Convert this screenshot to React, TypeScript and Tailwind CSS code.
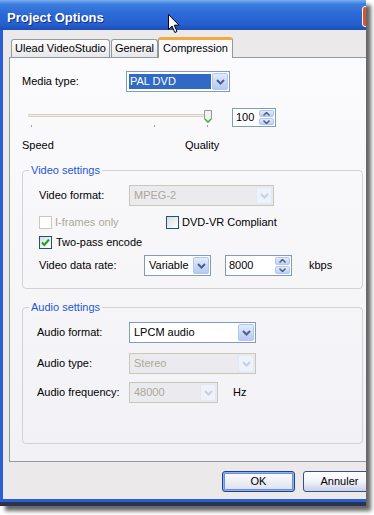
import React from "react";

function Chevron({ disabled }: { disabled?: boolean }) {
  return (
    <svg width="9" height="6" viewBox="0 0 9 6">
      <path d="M1 1 L4.5 4.5 L8 1" stroke={disabled ? "#c6d0e6" : "#4d6185"} strokeWidth="2" fill="none" />
    </svg>
  );
}

function DropBtn({ disabled }: { disabled?: boolean }) {
  return (
    <div
      className={
        disabled
          ? "w-[16px] h-full rounded-[2px] border border-[#e1e8f6] bg-[#eef2fb] flex items-center justify-center"
          : "w-[16px] h-full rounded-[2px] border border-[#b4c6ee] bg-gradient-to-b from-[#e3ebfd] to-[#b4c9f4] flex items-center justify-center"
      }
    >
      <Chevron disabled={disabled} />
    </div>
  );
}

function Select({
  className,
  text,
  disabled,
  highlight,
}: {
  className: string;
  text: string;
  disabled?: boolean;
  highlight?: boolean;
}) {
  return (
    <div
      className={`${className} h-[21px] border flex items-stretch p-[1px] ${
        disabled ? "border-[#c9c7ba] bg-[#ebeaee]" : "border-[#7f9db9] bg-white"
      }`}
    >
      <div className="flex-1 flex items-center p-[1px]">
        {highlight ? (
          <div className="h-full flex-1 bg-[#316ac5] text-white flex items-center px-[1px]">{text}</div>
        ) : (
          <div className={disabled ? "pl-[2px] text-[#aca899]" : "pl-[2px]"}>{text}</div>
        )}
      </div>
      <DropBtn disabled={disabled} />
    </div>
  );
}

function SpinBtns() {
  return (
    <div className="w-[15px] flex flex-col gap-[1px] py-[1px]">
      <div className="flex-1 rounded-[2px] border border-[#b4c6ee] bg-gradient-to-b from-[#e3ebfd] to-[#bccff5] flex items-center justify-center">
        <svg width="7" height="4" viewBox="0 0 7 4">
          <path d="M0.5 3.5 L3.5 0.5 L6.5 3.5" stroke="#4d6185" strokeWidth="1.5" fill="none" />
        </svg>
      </div>
      <div className="flex-1 rounded-[2px] border border-[#b4c6ee] bg-gradient-to-b from-[#e3ebfd] to-[#bccff5] flex items-center justify-center">
        <svg width="7" height="4" viewBox="0 0 7 4">
          <path d="M0.5 0.5 L3.5 3.5 L6.5 0.5" stroke="#4d6185" strokeWidth="1.5" fill="none" />
        </svg>
      </div>
    </div>
  );
}

function SpinBox({ className, value }: { className: string; value: string }) {
  return (
    <div className={`${className} border border-[#7f9db9] bg-white flex items-stretch pr-[1px]`}>
      <div className="flex-1 flex items-center pl-[3px]">{value}</div>
      <SpinBtns />
    </div>
  );
}

function Check({ checked, disabled }: { checked?: boolean; disabled?: boolean }) {
  return (
    <div
      className={
        disabled
          ? "w-[13px] h-[13px] border border-[#cac8bb] bg-white"
          : "w-[13px] h-[13px] border border-[#1c5180] bg-gradient-to-br from-[#dcdcd7] to-white flex items-center justify-center"
      }
    >
      {checked && (
        <svg width="11" height="11" viewBox="0 0 11 11">
          <path d="M2 5.5 L4.3 8 L9 2.5" stroke="#21a121" strokeWidth="2" fill="none" />
        </svg>
      )}
    </div>
  );
}

export default function App() {
  return (
    <div className="w-[374px] h-[515px] bg-white font-['Liberation_Sans',Arial,sans-serif] text-[11px] leading-[13px] text-black">
      <div className="relative w-[366px] h-[506px] overflow-hidden shadow-[5px_5px_4px_rgba(0,0,0,0.6)]">
        <div className="w-[385px] h-full flex flex-col">
          {/* Title bar */}
          <div className="h-[30px] shrink-0 flex items-center pl-[7px] bg-[linear-gradient(to_bottom,#7cadee_0%,#3c7ee0_14%,#2c69d6_45%,#2660cf_80%,#1d4db8_100%)]">
            <span className="pt-[4px] text-white font-bold text-[13px] [text-shadow:1px_1px_0_#10318c]">Project Options</span>
            <div className="ml-auto mr-[2px] mt-[2px] w-[21px] h-[21px] rounded-[3px] border border-white bg-[#d9552f]" />
          </div>
          {/* Body */}
          <div className="flex-1 flex flex-col border-l-[3px] border-b-[3px] border-[#2d5fd4] bg-[#ebe9ea]">
            {/* Tabs */}
            <div className="h-[27px] shrink-0 flex items-end pl-[8px]">
              <div className="w-[99px] h-[18px] border border-b-0 border-[#919b9c] rounded-t-[3px] bg-gradient-to-b from-white to-[#e6e6ec] flex items-center justify-center">
                Ulead VideoStudio
              </div>
              <div className="ml-[1px] w-[47px] h-[18px] border border-b-0 border-[#919b9c] rounded-t-[3px] bg-gradient-to-b from-white to-[#e6e6ec] flex items-center justify-center">
                General
              </div>
              <div className="relative z-10 mb-[-1px] w-[75px] h-[21px] border-x border-[#919b9c] border-t-[3px] border-t-[#f5a83c] rounded-t-[3px] bg-[#fbfbfd] flex items-center justify-center pb-[2px]">
                Compression
              </div>
            </div>
            {/* Panel */}
            <div className="ml-[6px] w-[364px] h-[405px] shrink-0 border border-[#919b9c] bg-gradient-to-b from-[#fbfbfd] to-[#f2f2f6] pl-[12px] pt-[13px] flex flex-col">
              <div className="h-[21px] flex items-center">
                <div className="w-[104px]">Media type:</div>
                <Select className="w-[104px]" text="PAL DVD" highlight />
              </div>
              <div className="mt-[16px] h-[19px] flex items-center">
                <div className="relative ml-[6px] w-[182px] h-[19px]">
                  <div className="absolute left-0 right-0 top-[6px] h-[3px] rounded-[1px] border border-[#d6d3c6] bg-[#f1efe4]" />
                  <div className="absolute left-[3px] top-[17px] w-[1px] h-[2px] bg-[#a0a0a0]" />
                  <div className="absolute left-[126px] top-[17px] w-[1px] h-[2px] bg-[#a0a0a0]" />
                  <div className="absolute left-[179px] top-[17px] w-[1px] h-[2px] bg-[#a0a0a0]" />
                  <svg className="absolute left-[176px] top-[2px]" width="8" height="13" viewBox="0 0 8 13">
                    <path d="M0.5 0.5 H7.5 V9 L4 12.5 L0.5 9 Z" fill="#f3f3ee" stroke="#8c9aa2" />
                    <path d="M1 9 L4 12 L7 9" stroke="#39b339" strokeWidth="1.3" fill="none" />
                  </svg>
                </div>
                <SpinBox className="ml-[22px] w-[44px] h-[19px]" value="100" />
              </div>
              <div className="mt-[12px] h-[13px] flex">
                <div className="w-[163px]">Speed</div>
                <div>Quality</div>
              </div>
              {/* Video settings */}
              <div className="relative mt-[18px] w-[341px] border border-[#d2d2d6] rounded-[4px] pl-[16px] pt-[14px] pb-[12px]">
                <div className="absolute top-[-7px] left-[6px] px-[2px] bg-[#f9f9fc] text-[#1f56d0]">Video settings</div>
                <div className="h-[21px] flex items-center">
                  <div className="w-[90px]">Video format:</div>
                  <Select className="w-[145px]" text="MPEG-2" disabled />
                </div>
                <div className="mt-[10px] h-[13px] flex items-center">
                  <div className="w-[127px] flex items-center">
                    <Check disabled />
                    <span className="ml-[3px] text-[#aca899]">I-frames only</span>
                  </div>
                  <Check />
                  <span className="ml-[3px]">DVD-VR Compliant</span>
                </div>
                <div className="mt-[7px] h-[13px] flex items-center">
                  <Check checked />
                  <span className="ml-[4px]">Two-pass encode</span>
                </div>
                <div className="mt-[6px] h-[21px] flex items-center">
                  <div className="w-[105px]">Video data rate:</div>
                  <Select className="w-[67px]" text="Variable" />
                  <SpinBox className="ml-[14px] w-[67px] h-[21px]" value="8000" />
                  <span className="ml-[17px]">kbps</span>
                </div>
              </div>
              {/* Audio settings */}
              <div className="relative mt-[18px] w-[341px] border border-[#d2d2d6] rounded-[4px] pl-[14px] pt-[14px] pb-[40px]">
                <div className="absolute top-[-7px] left-[6px] px-[2px] bg-[#f6f6f9] text-[#1f56d0]">Audio settings</div>
                <div className="h-[21px] flex items-center">
                  <div className="w-[92px]">Audio format:</div>
                  <Select className="w-[127px]" text="LPCM audio" />
                </div>
                <div className="mt-[10px] h-[21px] flex items-center">
                  <div className="w-[92px]">Audio type:</div>
                  <Select className="w-[127px]" text="Stereo" disabled />
                </div>
                <div className="mt-[8px] h-[21px] flex items-center">
                  <div className="w-[92px]">Audio frequency:</div>
                  <Select className="w-[89px]" text="48000" disabled />
                  <span className="ml-[15px]">Hz</span>
                </div>
              </div>
            </div>
            {/* Buttons */}
            <div className="mt-[9px] h-[21px] flex justify-end gap-[8px] pr-[9px]">
              <div className="w-[73px] h-[21px] rounded-[3px] border border-[#1f3f8f] shadow-[inset_0_0_0_1px_#8fb0ee,inset_0_0_0_2px_#6b8fe0] bg-gradient-to-b from-white to-[#dcdfec] flex items-center justify-center">
                OK
              </div>
              <div className="w-[73px] h-[21px] rounded-[3px] border border-[#3b4f82] bg-gradient-to-b from-white via-[#f2f3f8] to-[#c7d0ea] flex items-center justify-center">
                Annuler
              </div>
            </div>
          </div>
          <div className="h-[4px] shrink-0 bg-[#2a3450]" />
        </div>
        {/* mouse cursor */}
        <svg className="absolute left-[168px] top-[14px]" width="13" height="20" viewBox="0 0 13 20">
          <path d="M0.5 0.5 L0.5 15.5 L4 12 L6.8 18.5 L9 17.5 L6.3 11.2 L11 11.2 Z" fill="white" stroke="black" strokeWidth="1" />
        </svg>
      </div>
    </div>
  );
}
